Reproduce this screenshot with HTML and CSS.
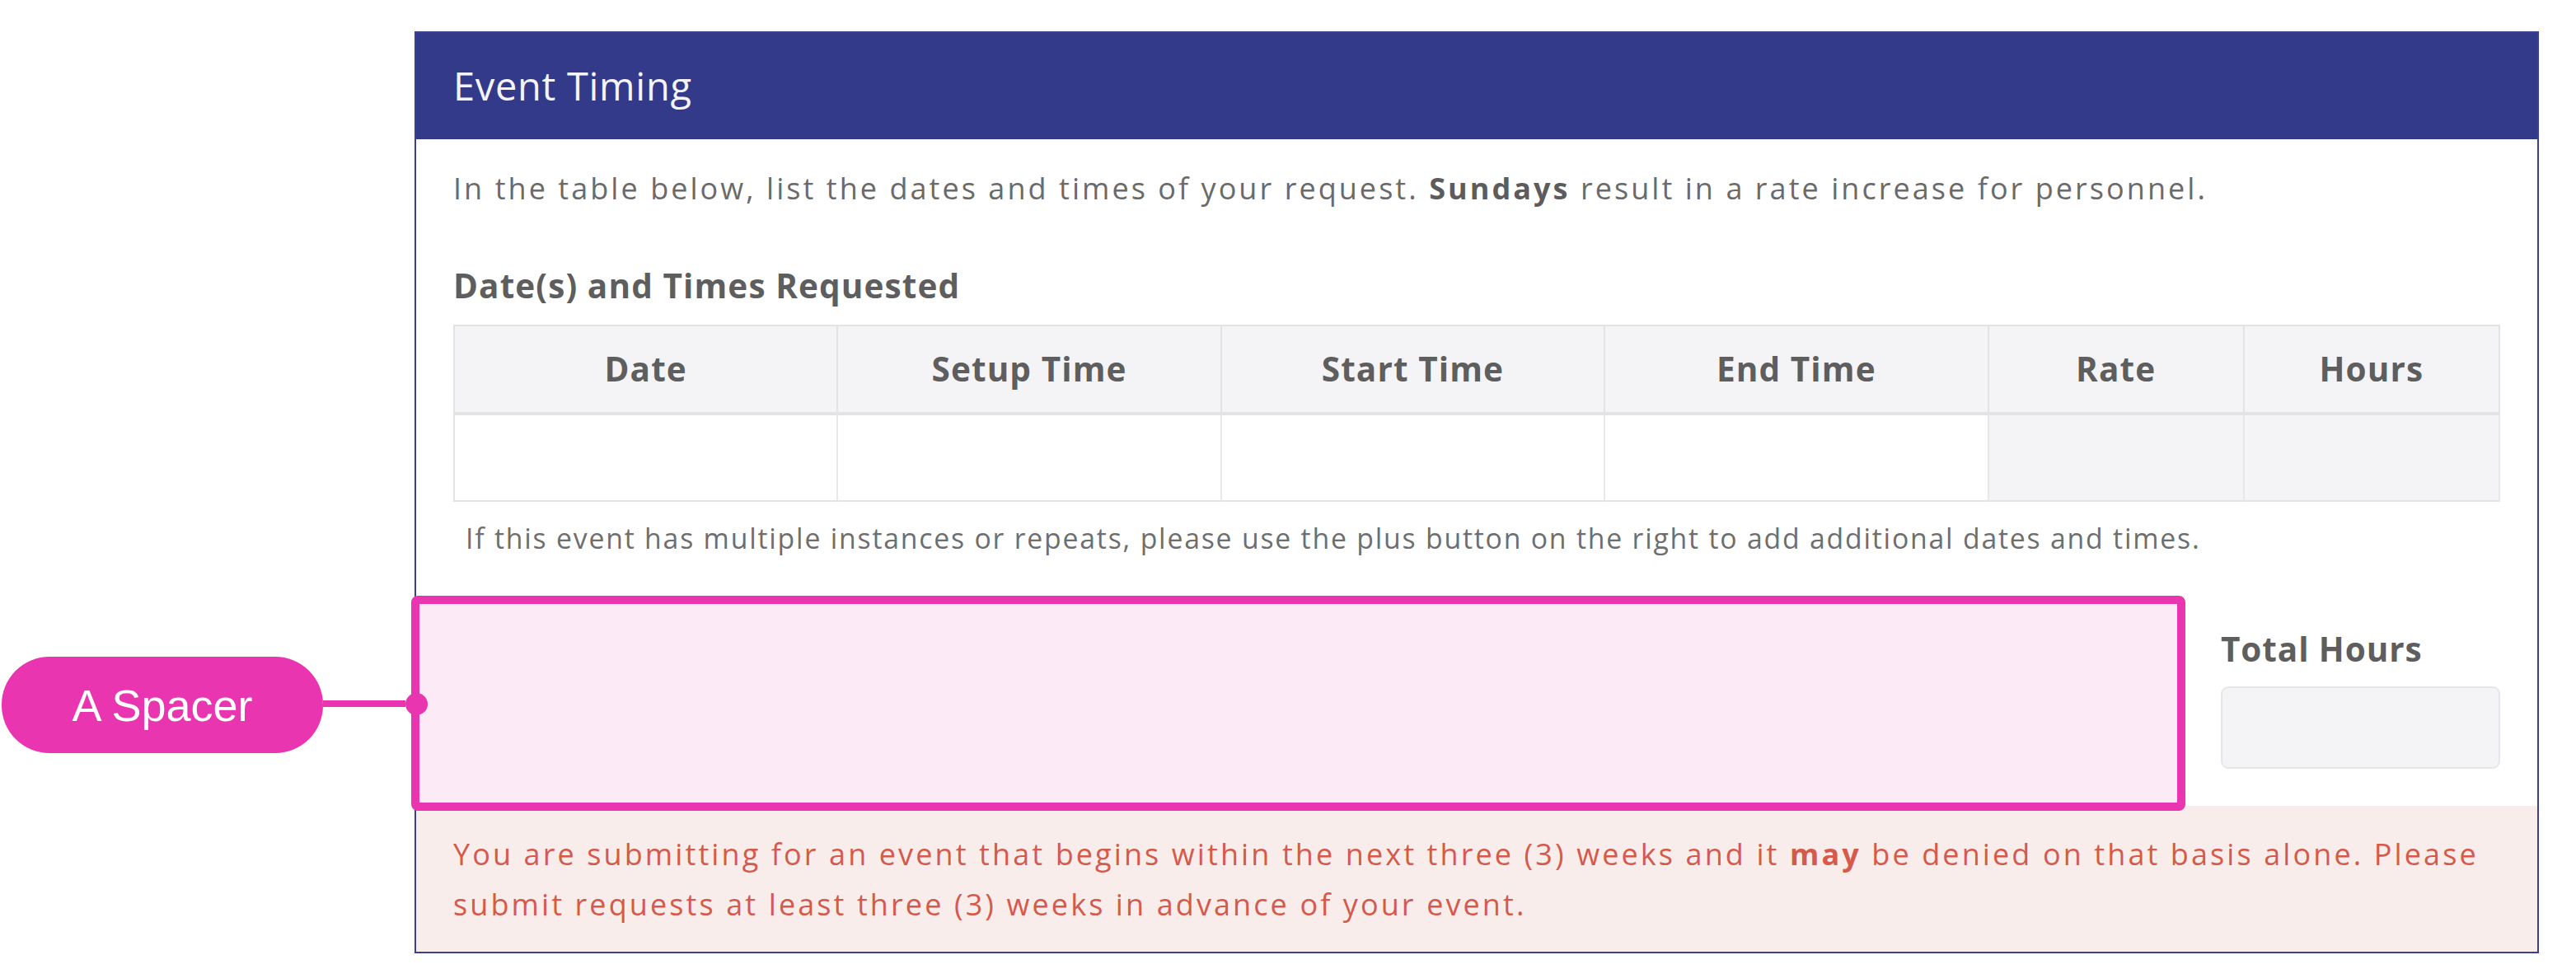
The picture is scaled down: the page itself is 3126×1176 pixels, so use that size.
FILE: index.html
```html
<!DOCTYPE html>
<html lang="en">
<head>
<meta charset="utf-8">
<title>Event Timing</title>
<link rel="stylesheet" href="styles.css">
</head>
<body>
<div class="stage">
  <section class="panel">
    <header class="panel-head">
      <h2 class="panel-title">Event Timing</h2>
    </header>
    <div class="panel-body">
      <p class="intro">In the table below, list the dates and times of your request. <strong>Sundays</strong> result in a rate increase for personnel.</p>
      <h3 class="field-label">Date(s) and Times Requested</h3>
      <table class="times">
        <colgroup>
          <col class="c3"><col class="c3"><col class="c3"><col class="c3"><col class="c2"><col class="c2">
        </colgroup>
        <thead>
          <tr><th>Date</th><th>Setup Time</th><th>Start Time</th><th>End Time</th><th>Rate</th><th>Hours</th></tr>
        </thead>
        <tbody>
          <tr><td></td><td></td><td></td><td></td><td class="ro"></td><td class="ro"></td></tr>
        </tbody>
      </table>
      <p class="note">If this event has multiple instances or repeats, please use the plus button on the right to add additional dates and times.</p>
      <div class="total-row">
        <div class="spacer">
          <div class="callout">
            <span class="pill">A Spacer</span>
            <span class="leader"></span>
            <span class="dot"></span>
          </div>
        </div>
        <div class="total">
          <div class="field-label total-label">Total Hours</div>
          <div class="total-input"></div>
        </div>
      </div>
    </div>
    <div class="warning">
      <p>You are submitting for an event that begins within the next three (3) weeks and it <strong>may</strong> be denied on that basis alone. Please submit requests at least three (3) weeks in advance of your event.</p>
    </div>
  </section>
</div>
</body>
</html>
```
FILE: styles.css
```css
* { box-sizing: border-box; }

html, body {
  margin: 0;
  padding: 0;
  background: #ffffff;
}

body {
  font-family: "Open Sans", "Noto Sans", sans-serif;
  color: #6a6a6a;
}

.stage {
  padding: 38px 0 0 503px;
}

.panel {
  width: 2578px;
  border: 2px solid #3b408f;
  background: #ffffff;
}

.panel-head {
  background: #343a8a;
  height: 129px;
  padding: 0 45px;
  display: flex;
  align-items: center;
}

.panel-title {
  margin: 0;
  font-size: 47px;
  font-weight: 400;
  letter-spacing: 0.7px;
  color: #f4f4fa;
  line-height: 1.2;
}

.panel-body {
  padding: 33px 45px 0 45px;
}

.intro {
  margin: 0;
  font-size: 36px;
  line-height: 54px;
  letter-spacing: 3.05px;
  color: #6a6a6a;
}

.intro strong {
  color: #5c5c5c;
  font-weight: 700;
}

.field-label {
  margin: 61px 0 16px 0;
  font-size: 40.5px;
  line-height: 60.75px;
  font-weight: 700;
  letter-spacing: 1.1px;
  color: #5e5e5e;
}

.times {
  width: 100%;
  table-layout: fixed;
  border-collapse: separate;
  border-spacing: 0;
  border-top: 2px solid #e3e3e5;
  border-left: 2px solid #e3e3e5;
}

.times .c3 { width: 18.75%; }
.times .c2 { width: 12.5%; }

.times th {
  height: 108px;
  padding: 0;
  background: #f4f4f6;
  border-right: 2px solid #e3e3e5;
  border-bottom: 4px solid #e3e3e5;
  font-size: 40.5px;
  font-weight: 700;
  letter-spacing: 1.1px;
  color: #5e5e5e;
  text-align: center;
  vertical-align: middle;
}

.times td {
  height: 105px;
  padding: 0;
  background: #ffffff;
  border-right: 2px solid #e8e8ea;
  border-bottom: 2px solid #e3e3e5;
}

.times td.ro {
  background: #f4f4f6;
}

.note {
  margin: 19px 0 0 15px;
  font-size: 33.75px;
  line-height: 50.6px;
  letter-spacing: 1.8px;
  color: #6e6e6e;
}

.total-row {
  display: flex;
  align-items: flex-start;
  gap: 43px;
  margin-top: 45px;
}

.spacer {
  position: relative;
  z-index: 2;
  flex: 1 1 auto;
  margin-left: -51px;
  margin-bottom: -6px;
  height: 261px;
  border: 10px solid #e935b0;
  border-radius: 8px;
  background: #fcebf7;
}

.callout {
  position: absolute;
  left: -507px;
  top: 64px;
  width: 517px;
  height: 117px;
  display: flex;
  align-items: center;
}

.pill {
  flex: 0 0 390px;
  height: 117px;
  border-radius: 58px;
  background: #e935b0;
  color: #ffffff;
  font-family: "Liberation Sans", Arial, sans-serif;
  font-size: 54px;
  display: flex;
  align-items: center;
  justify-content: center;
}

.leader {
  flex: 1 1 auto;
  height: 8px;
  margin-top: -3px;
  background: #e935b0;
}

.dot {
  flex: 0 0 27px;
  height: 27px;
  margin-top: -3px;
  border-radius: 50%;
  background: #e935b0;
}

.total {
  flex: 0 0 339px;
  padding: 35px 0 43px 0;
}

.total-label {
  margin: 0 0 14px 0;
  letter-spacing: 0.9px;
}

.total-input {
  height: 100px;
  border: 2px solid #e6e6e8;
  border-radius: 9px;
  background: #f4f4f6;
}

.warning {
  position: relative;
  z-index: 1;
  background: #f9edeb;
  padding: 28px 45px 27px 45px;
}

.warning p {
  margin: 0;
  font-size: 36px;
  line-height: 61px;
  letter-spacing: 3.1px;
  color: #d45a4b;
}

.warning strong {
  font-weight: 700;
}
```
